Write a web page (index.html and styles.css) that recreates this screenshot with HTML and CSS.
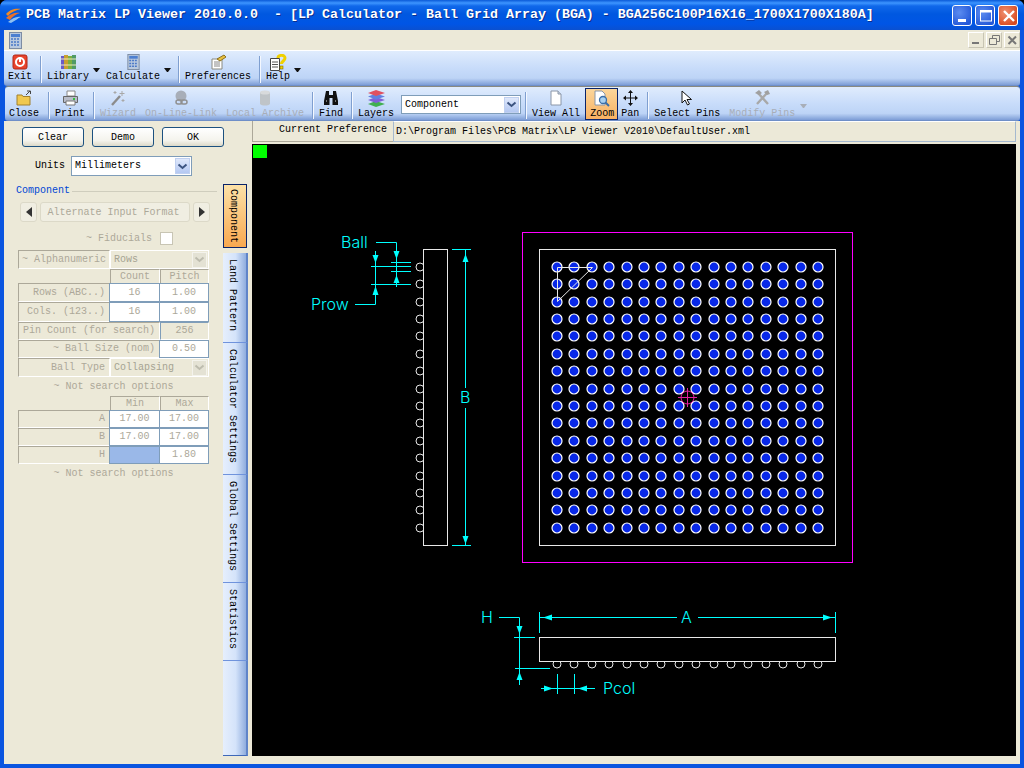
FILE: index.html
```html
<!DOCTYPE html>
<html lang="en">
<head>
<meta charset="utf-8">
<title>PCB Matrix LP Viewer</title>
<link rel="stylesheet" href="styles.css">
</head>
<body>
<div class="window">
  <header class="titlebar">
    <svg class="app-logo" width="17" height="17" viewBox="0 0 17 17"><path d="M1 7C5 2 11 1 16 2C11 3 6 5 3 9Z" fill="#f08a24"/><path d="M1 11C5 7 10 5 15 6C11 7 7 10 5 13Z" fill="#e8702a"/><path d="M3 15C7 12 11 9 16 10C13 11 10 14 6 16Z" fill="#8fc0f0"/></svg>
    <span class="title-text">PCB Matrix LP Viewer 2010.0.0  - [LP Calculator - Ball Grid Array (BGA) - BGA256C100P16X16_1700X1700X180A]</span>
    <div class="win-btns">
      <span class="win-btn"><svg width="20" height="20" viewBox="0 0 20 20"><rect x="5" y="13" width="8" height="3" fill="#fff"/></svg></span>
      <span class="win-btn"><svg width="20" height="20" viewBox="0 0 20 20"><rect x="4.500" y="5" width="11" height="10" fill="none" stroke="#fff"/><rect x="4" y="4" width="12" height="2.500" fill="#fff"/></svg></span>
      <span class="win-btn win-btn-close"><svg width="20" height="20" viewBox="0 0 20 20"><path d="M5 5L15 15M15 5L5 15" stroke="#fff" stroke-width="2.400"/></svg></span>
    </div>
  </header>

  <div class="menu-row">
    <svg class="menu-icon" width="13" height="17" viewBox="0 0 13 17"><rect x=".5" y=".5" width="12" height="16" fill="#b9c9de" stroke="#7d8ca3"/><rect x="2" y="2" width="9" height="3" fill="#4c7fd0"/><path d="M2 7h9M2 10h9M2 13h9" stroke="#4a78c8" stroke-width="1.600" stroke-dasharray="2 1"/></svg>
    <div class="mdi-btns">
      <span class="mdi-btn"><svg width="15" height="15" viewBox="0 0 15 15"><rect x="3" y="9" width="7" height="2" fill="#777"/></svg></span>
      <span class="mdi-btn"><svg width="15" height="15" viewBox="0 0 15 15"><path d="M5.500 5.500V2.500H12.500V8.500H10M2.500 5.500H9.500V11.500H2.500Z" fill="none" stroke="#777"/></svg></span>
      <span class="mdi-btn"><svg width="15" height="15" viewBox="0 0 15 15"><path d="M3.500 3.500L11 11M11 3.500L3.500 11" stroke="#777" stroke-width="2"/></svg></span>
    </div>
  </div>

  <nav class="toolbar toolbar-main">
    <div class="tool">
      <svg width="16" height="16" viewBox="0 0 16 16"><rect x="1" y="1" width="14" height="14" rx="2" fill="#e8432c" stroke="#b02818"/><circle cx="8" cy="8" r="4" fill="none" stroke="#fff" stroke-width="2"/><rect x="7" y="3" width="2" height="5" fill="#fff"/></svg>
      <span>Exit</span>
    </div>
    <i class="sep"></i>
    <div class="tool">
      <svg width="17" height="16" viewBox="0 0 17 16"><rect x="1" y="2" width="3" height="13" fill="#6a5cc8"/><rect x="4" y="1" width="4" height="14" fill="#c8a030"/><rect x="8" y="2" width="4" height="13" fill="#7ab040"/><rect x="12" y="1" width="4" height="14" fill="#4f9a68"/><path d="M1 5h15M1 11h15" stroke="#f0e8c0"/></svg>
      <span>Library</span>
    </div>
    <i class="drop"></i>
    <div class="tool">
      <svg width="13" height="16" viewBox="0 0 13 17"><rect x=".5" y=".5" width="12" height="16" fill="#b9c9de" stroke="#7d8ca3"/><rect x="2" y="2" width="9" height="3" fill="#4c7fd0"/><path d="M2 7h9M2 10h9M2 13h9" stroke="#4a78c8" stroke-width="1.600" stroke-dasharray="2 1"/></svg>
      <span>Calculate</span>
    </div>
    <i class="drop"></i>
    <i class="sep"></i>
    <div class="tool">
      <svg width="17" height="16" viewBox="0 0 17 16"><path d="M2 5H12V15H2Z" fill="#fff" stroke="#8a8a80"/><path d="M4 8h6M4 10h6M4 12h6" stroke="#888"/><path d="M7 5L14 1L16 3L10 7Z" fill="#e8c040" stroke="#8a7020"/></svg>
      <span>Preferences</span>
    </div>
    <i class="sep"></i>
    <div class="tool">
      <svg width="18" height="17" viewBox="0 0 18 17"><path d="M1.500 4.500H10.500V16.500H1.500Z" fill="#fff" stroke="#444"/><path d="M3 8h6M3 10.500h6M3 13h6" stroke="#555"/><path d="M9 4C9 1 16 0 16 4C16 7 12.500 7 12.500 10" fill="none" stroke="#f0d000" stroke-width="3"/><rect x="11" y="12" width="3" height="3" fill="#f0d000" stroke="#665800" stroke-width=".5"/></svg>
      <span>Help</span>
    </div>
    <i class="drop"></i>
  </nav>

  <nav class="toolbar toolbar-sub">
    <div class="tool tool-wide">
      <svg width="17" height="16" viewBox="0 0 17 16"><path d="M1 5H6L7 6.500H14V15H1Z" fill="#f0c850" stroke="#a08030"/><path d="M10 5L14 1M11 1H14.500V4" fill="none" stroke="#444"/></svg>
      <span>Close</span>
    </div>
    <i class="sep"></i>
    <div class="tool">
      <svg width="17" height="16" viewBox="0 0 17 16"><path d="M5 1H13V6H5Z" fill="#fff" stroke="#888"/><path d="M1.500 6.500H15.500V12.500H1.500Z" fill="#b8bcc8" stroke="#666"/><path d="M4 11H13V15H4Z" fill="#fff" stroke="#777"/><rect x="11" y="8" width="2" height="2" fill="#30c040"/></svg>
      <span>Print</span>
    </div>
    <i class="sep"></i>
    <div class="tool tool-off tool-wide">
      <svg width="16" height="16" viewBox="0 0 16 16"><path d="M2 15L10 6" stroke="#8c8c8c" stroke-width="2.400"/><path d="M12 1v5M9.500 3.500h5M5 1v3M3.500 2.500h3M13 9v3M11.500 10.500h3" stroke="#a8a8a8"/></svg>
      <span>Wizard</span>
    </div>
    <div class="tool tool-off tool-wide">
      <svg width="16" height="16" viewBox="0 0 16 16"><circle cx="8" cy="6" r="5.500" fill="#a8aeb8"/><rect x="3" y="10" width="6" height="4" rx="2" fill="none" stroke="#909090" stroke-width="1.500"/><rect x="8" y="10" width="6" height="4" rx="2" fill="none" stroke="#909090" stroke-width="1.500"/></svg>
      <span>On-Line-Link</span>
    </div>
    <div class="tool tool-off">
      <svg width="14" height="16" viewBox="0 0 14 16"><path d="M2 2V14C4 16 10 16 12 14V2Z" fill="#bfc4c8"/><ellipse cx="7" cy="2.500" rx="5" ry="2" fill="#d8dadc"/></svg>
      <span>Local Archive</span>
    </div>
    <i class="sep"></i>
    <div class="tool">
      <svg width="16" height="16" viewBox="0 0 16 16"><path d="M3 1H6V5H10V1H13L15 11V15H9.500V8H6.500V15H1V11Z" fill="#111"/><path d="M3 11h1M12 11h1" stroke="#ddd"/></svg>
      <span>Find</span>
    </div>
    <i class="sep"></i>
    <div class="tool tool-layers">
      <svg width="19" height="18" viewBox="0 0 19 18"><path d="M1 14L9 11L18 14L9 17Z" fill="#40b050"/><path d="M1 10L9 7L18 10L9 13Z" fill="#8060d8"/><path d="M1 6.500L9 3.500L18 6.500L9 9.500Z" fill="#6080e0"/><path d="M1 3L9 0L18 3L9 6Z" fill="#e05060"/></svg>
      <span>Layers</span>
    </div>
    <div class="combo combo-tool"><span>Component</span><b class="chev"><svg width="11" height="7" viewBox="0 0 11 7"><path d="M1.500 1.500L5.500 5L9.500 1.500" fill="none" stroke="#3c5480" stroke-width="2"/></svg></b></div>
    <i class="sep"></i>
    <div class="tool">
      <svg width="12" height="16" viewBox="0 0 12 16"><path d="M1 1H8L11 4V15H1Z" fill="#fff" stroke="#8a96a8"/><path d="M8 1V4H11" fill="#c8d4e4" stroke="#8a96a8"/></svg>
      <span>View All</span>
    </div>
    <div class="tool tool-active">
      <svg width="18" height="17" viewBox="0 0 18 17"><path d="M2 1H9L12 4V15H2Z" fill="#fff" stroke="#8a96a8"/><circle cx="10" cy="10" r="3.500" fill="#a8d0f0" stroke="#3a6ea8" stroke-width="1.300"/><path d="M12.500 12.500L16 16" stroke="#3a6ea8" stroke-width="2"/></svg>
      <span>Zoom</span>
    </div>
    <div class="tool tool-pan">
      <svg width="15" height="16" viewBox="0 0 15 16"><path d="M7.500 1V15M1 8H14" stroke="#111"/><path d="M7.500 0L5 3H10ZM7.500 16L5 13H10ZM0 8L3 5.500V10.500ZM15 8L12 5.500V10.500Z" fill="#111"/></svg>
      <span>Pan</span>
    </div>
    <i class="sep"></i>
    <div class="tool tool-wide">
      <svg width="12" height="16" viewBox="0 0 12 16"><path d="M1 1V13L4 10L6.500 15L8.500 14L6 9.500H10.500Z" fill="#fff" stroke="#111"/></svg>
      <span>Select Pins</span>
    </div>
    <div class="tool tool-off">
      <svg width="17" height="16" viewBox="0 0 17 16"><path d="M3 14L13 3M14 14L4 3" stroke="#a8a8a8" stroke-width="2.400"/><path d="M1 3L5 0L8 3L5 5ZM10 2L14 0L16 4L13 5Z" fill="#a0a0a0"/></svg>
      <span>Modify Pins</span>
    </div>
    <i class="drop drop-off"></i>
  </nav>

  <main class="content">
    <aside class="panel">
      <div class="actions">
        <button class="btn" type="button">Clear</button>
        <button class="btn" type="button">Demo</button>
        <button class="btn" type="button">OK</button>
      </div>
      <div class="units">
        <span>Units</span>
        <div class="combo combo-units"><span>Millimeters</span><b class="chev"><svg width="11" height="7" viewBox="0 0 11 7"><path d="M1.500 1.500L5.500 5L9.500 1.500" fill="none" stroke="#3c5480" stroke-width="2"/></svg></b></div>
      </div>
      <div class="group-head"><span>Component</span><i></i></div>
      <div class="nav-row">
        <span class="nav-btn"><svg width="6" height="10" viewBox="0 0 6 10"><path d="M6 0V10L0 5Z" fill="#333"/></svg></span>
        <span class="nav-btn nav-main">Alternate Input Format</span>
        <span class="nav-btn"><svg width="6" height="10" viewBox="0 0 6 10"><path d="M0 0V10L6 5Z" fill="#333"/></svg></span>
      </div>
      <div class="fiducials"><span>~ Fiducials</span><i class="check"></i></div>
      <div class="form-grid">
        <div class="cell cell-left">~ Alphanumeric</div>
        <div class="cell-select span2"><span>Rows</span><b class="chev chev-off"><svg width="11" height="7" viewBox="0 0 11 7"><path d="M1.500 1.500L5.500 5L9.500 1.500" fill="none" stroke="#bdbcae" stroke-width="2"/></svg></b></div>
        <div class="head head-start">Count</div>
        <div class="head">Pitch</div>
        <div class="cell">Rows (ABC..)</div>
        <div class="field">16</div>
        <div class="field">1.00</div>
        <div class="cell">Cols. (123..)</div>
        <div class="field">16</div>
        <div class="field">1.00</div>
        <div class="cell cell-center span2">Pin Count (for search)</div>
        <div class="readout">256</div>
        <div class="cell span2">~ Ball Size (nom)</div>
        <div class="field">0.50</div>
        <div class="cell">Ball Type</div>
        <div class="cell-select span2"><span>Collapsing</span><b class="chev chev-off"><svg width="11" height="7" viewBox="0 0 11 7"><path d="M1.500 1.500L5.500 5L9.500 1.500" fill="none" stroke="#bdbcae" stroke-width="2"/></svg></b></div>
        <div class="note span3">~ Not search options</div>
        <div class="head head-start">Min</div>
        <div class="head">Max</div>
        <div class="cell">A</div>
        <div class="field">17.00</div>
        <div class="field">17.00</div>
        <div class="cell">B</div>
        <div class="field">17.00</div>
        <div class="field">17.00</div>
        <div class="cell">H</div>
        <div class="field field-selected"></div>
        <div class="field">1.80</div>
        <div class="note span3">~ Not search options</div>
      </div>
    </aside>

    <div class="tabs">
      <div class="tab tab-active">Component</div>
      <div class="tab">Land Pattern</div>
      <div class="tab">Calculator Settings</div>
      <div class="tab">Global Settings</div>
      <div class="tab">Statistics</div>
      <div class="tab tab-rest"></div>
    </div>

    <section class="viewer">
      <div class="pref-bar">
        <div class="pref-label">Current Preference</div>
        <div class="pref-path">D:\Program Files\PCB Matrix\LP Viewer V2010\DefaultUser.xml</div>
      </div>
      <svg class="canvas" width="764" height="612" viewBox="252 144 764 612">
        <defs>
          <g id="ballrow" class="ball">
            <circle cx="557" cy="267" r="5"/><circle cx="574" cy="267" r="5"/><circle cx="592" cy="267" r="5"/><circle cx="609" cy="267" r="5"/><circle cx="627" cy="267" r="5"/><circle cx="644" cy="267" r="5"/><circle cx="661" cy="267" r="5"/><circle cx="679" cy="267" r="5"/><circle cx="696" cy="267" r="5"/><circle cx="714" cy="267" r="5"/><circle cx="731" cy="267" r="5"/><circle cx="748" cy="267" r="5"/><circle cx="766" cy="267" r="5"/><circle cx="783" cy="267" r="5"/><circle cx="801" cy="267" r="5"/><circle cx="818" cy="267" r="5"/>
          </g>
        </defs>
        <rect class="marker" x="253" y="145" width="14" height="13"/>
        <rect class="outline-magenta" x="522.500" y="232.500" width="330" height="330"/>
        <rect class="outline-white" x="539.500" y="249.500" width="296" height="296"/>
        <use href="#ballrow"/><use href="#ballrow" y="17"/><use href="#ballrow" y="35"/><use href="#ballrow" y="52"/><use href="#ballrow" y="69"/><use href="#ballrow" y="87"/><use href="#ballrow" y="104"/><use href="#ballrow" y="122"/><use href="#ballrow" y="139"/><use href="#ballrow" y="156"/><use href="#ballrow" y="174"/><use href="#ballrow" y="191"/><use href="#ballrow" y="209"/><use href="#ballrow" y="226"/><use href="#ballrow" y="243"/><use href="#ballrow" y="261"/>
        <path class="outline-white" d="M557.500 267.500H592.500M557.500 267.500V301.500L592.500 267.500"/>
        <path class="crosshair" d="M678 397.500H697M687.500 388V407"/>
        <circle class="crosshair" cx="687.500" cy="397.500" r="6.500"/>
        <!-- side view -->
        <g class="pin">
          <circle cx="420" cy="267" r="4"/><circle cx="420" cy="284" r="4"/><circle cx="420" cy="302" r="4"/><circle cx="420" cy="319" r="4"/><circle cx="420" cy="336" r="4"/><circle cx="420" cy="354" r="4"/><circle cx="420" cy="371" r="4"/><circle cx="420" cy="389" r="4"/><circle cx="420" cy="406" r="4"/><circle cx="420" cy="423" r="4"/><circle cx="420" cy="441" r="4"/><circle cx="420" cy="458" r="4"/><circle cx="420" cy="476" r="4"/><circle cx="420" cy="493" r="4"/><circle cx="420" cy="510" r="4"/><circle cx="420" cy="528" r="4"/>
        </g>
        <rect class="body-rect" x="423.500" y="249.500" width="24" height="296"/>
        <!-- bottom view -->
        <g class="pin">
          <circle cx="557" cy="664" r="4"/><circle cx="574" cy="664" r="4"/><circle cx="592" cy="664" r="4"/><circle cx="609" cy="664" r="4"/><circle cx="627" cy="664" r="4"/><circle cx="644" cy="664" r="4"/><circle cx="661" cy="664" r="4"/><circle cx="679" cy="664" r="4"/><circle cx="696" cy="664" r="4"/><circle cx="714" cy="664" r="4"/><circle cx="731" cy="664" r="4"/><circle cx="748" cy="664" r="4"/><circle cx="766" cy="664" r="4"/><circle cx="783" cy="664" r="4"/><circle cx="801" cy="664" r="4"/><circle cx="818" cy="664" r="4"/>
        </g>
        <rect class="body-rect" x="539.500" y="637.500" width="296" height="24"/>
        <!-- dimensions -->
        <path class="dim" d="M376 242.500H396.500V287M391 262.500H411M391 271.500H411M371 266.500H411M371 284.500H411M375.500 251V304.500H355"/>
        <path class="dim" d="M465.500 250V388M465.500 408V545M452 249.500H471M452 545.500H471"/>
        <path class="dim" d="M540 617.500H677M698 617.500H835M539.500 612V633M835.500 612V633"/>
        <path class="dim" d="M499 617.500H519.500V685M514 637.500H535M515 668.500H550"/>
        <path class="dim" d="M557.500 674V694M574.500 674V694M541 688.500H595"/>
        <path class="arrow" d="M393.500 251H399.500L396.500 259ZM393.500 283H399.500L396.500 275ZM372.500 255H378.500L375.500 263ZM372.500 295H378.500L375.500 286ZM465.500 254L462.500 262H468.500ZM465.500 544L462.500 536H468.500ZM543 617.500L552 614.500V620.500ZM832 617.500L823 614.500V620.500ZM516.500 626H522.500L519.500 634ZM516.500 680H522.500L519.500 672ZM553 688.500L544 685.500V691.500ZM578 688.500L587 685.500V691.500Z"/>
        <text class="label" x="341" y="248">Ball</text>
        <text class="label" x="311" y="310">Prow</text>
        <text class="label" x="460" y="403">B</text>
        <text class="label" x="681" y="623">A</text>
        <text class="label" x="481" y="623">H</text>
        <text class="label" x="603" y="694">Pcol</text>
      </svg>
    </section>
  </main>
</div>
</body>
</html>
```

FILE: styles.css
```css
* { box-sizing: border-box; }
html, body { margin: 0; padding: 0; }
body { width: 1024px; height: 768px; overflow: hidden; font: 10px/12px "Liberation Mono", monospace; color: #000; background: #000; }

.window { width: 1024px; height: 768px; display: flex; flex-direction: column; padding: 0 4px 4px; border-radius: 7px 7px 0 0; background: #0a55e0; }

/* title bar */
.titlebar { flex: 0 0 30px; margin: 0 -4px; padding: 0 6px 0 5px; display: flex; align-items: center; color: #fff; border-radius: 7px 7px 0 0;
  background: linear-gradient(#0a5ad8 0, #3d95ff 3px, #1068ea 6px, #0058e0 14px, #0055e5 24px, #0a50d0 30px); }
.app-logo { flex: none; margin-right: 4px; }
.title-text { flex: 1; font-size: 13.33px; font-weight: bold; white-space: pre; text-shadow: 1px 1px 0 #0a2f90; }
.win-btns { display: flex; gap: 3px; }
.win-btn { width: 20px; height: 21px; display: block; border: 1px solid #fff; border-radius: 3px; background: radial-gradient(circle at 35% 35%, #5c8cf0, #2458d8 80%); }
.win-btn svg { display: block; }
.win-btn-close { background: radial-gradient(circle at 35% 35%, #f09070, #d84a20 80%); }

/* menu row */
.menu-row { flex: 0 0 20px; padding-left: 5px; display: flex; align-items: center; justify-content: space-between; background: #ece9d8; }
.menu-icon { flex: none; }
.mdi-btns { display: flex; gap: 2px; }
.mdi-btn { width: 16px; height: 16px; border: 1px solid; border-color: #fff #c8c5b4 #c8c5b4 #fff; }
.mdi-btn svg { display: block; }

/* toolbars */
.toolbar { display: flex; align-items: flex-start; background: linear-gradient(#e0ecfd, #c8dcfa 50%, #bdd4f6 80%, #7d9dd6); }
.toolbar-main { flex: 0 0 36px; padding: 3px 0 0 4px; border-top: 1px solid #fff; border-radius: 0 0 3px 3px; border-bottom: 1px solid #6f8fc8; }
.toolbar-sub { flex: 0 0 34px; margin-top: 1px; margin-left: 1px; padding: 3px 0 0 4px; border-radius: 3px; border-bottom: 1px solid #6f8fc8; box-shadow: 0 -1px 0 #8a8a80; }
.tool { flex: none; margin-right: 8px; display: flex; flex-direction: column; align-items: center; justify-content: space-between; white-space: pre; }
.toolbar-main .tool { height: 29px; }
.toolbar-sub .tool { height: 30px; }
.tool svg { display: block; flex: none; margin-bottom: -3px; }
.tool span { display: block; height: 12px; }
.tool-wide { margin-right: 9px; }
.tool-off { color: #a8aeb8; }
.toolbar-sub .tool-active { margin: -2px 3px 0 -3px; padding: 2px 4px 0 5px; width: 33px; height: 32px; background: linear-gradient(#fcd79c, #f8b060); outline: 1px solid #0a246a; outline-offset: -1px; }
.tool-layers { margin-right: 7px; }
.sep { flex: none; width: 1px; height: 27px; margin: 2px 6px 0 0; background: #7f9fd0; box-shadow: 1px 0 0 #f4f8ff; }
.drop { flex: none; width: 7px; height: 4px; margin: 14px 6px 0 -4px; border-left: 3.5px solid transparent; border-right: 3.5px solid transparent; border-top: 4px solid #111; }
.drop-off { margin-left: -3px; border-top-color: #a8aeb8; }
.drop + .sep { margin-left: 1px; }

/* combos */
.combo { flex: none; display: flex; align-items: center; justify-content: space-between; background: #fff; border: 1px solid #7f9db9; padding: 0 1px 0 3px; }
.combo-tool { width: 120px; height: 19px; margin: 5px 4px 0 0; }
.combo-units { width: 121px; height: 20px; }
.chev { flex: none; width: 15px; height: 16px; display: flex; align-items: center; justify-content: center; background: linear-gradient(#dfe8fb, #b4c8f2); border: 1px solid #c0d0f0; }
.chev-off { background: #e4e2d4; border-color: #f4f3ec; }

/* left panel */
.content { flex: 1; display: flex; min-height: 0; background: #ece9d8; }
.panel { flex: 0 0 218px; min-width: 0; padding-top: 6px; }
.actions { display: flex; gap: 8px; padding-left: 18px; width: 222px; }
.btn { flex: none; width: 62px; height: 20px; padding: 2px 0 0; font: inherit; color: #000; border: 1px solid #1c5180; border-radius: 3px; background: linear-gradient(#fff, #f4f3ec 70%, #dcd9c8); }
.units { margin-top: 9px; height: 20px; padding-left: 31px; display: flex; align-items: center; gap: 6px; }
.group-head { margin-top: 8px; height: 14px; padding-left: 12px; display: flex; align-items: center; gap: 2px; color: #0046d5; }
.group-head i { flex: 0 0 145px; height: 1px; background: #cfcdbd; }
.nav-row { margin-top: 4px; padding-left: 16px; display: flex; gap: 3px; height: 20px; color: #aca899; }
.nav-btn { flex: 0 0 17px; display: flex; align-items: center; justify-content: center; border: 1px solid #dcd9c8; border-radius: 3px; background: #f0eee2; }
.nav-main { flex: 0 0 150px; padding: 2px 3px 0 0; }
.fiducials { margin-top: 10px; height: 13px; padding-left: 82px; display: flex; align-items: center; gap: 8px; color: #aca899; }
.check { width: 13px; height: 13px; background: #fff; border: 1px solid #c8c5b4; }

/* form grid */
.form-grid { margin: 5px 0 0 14px; display: grid; grid-template-columns: 92px 50px 49px; grid-template-rows: 19px 14px 19px 20px 18px 18px 19px 19px 14px 18px 18px 18px 18px; color: #aca899; }
.cell { display: flex; align-items: center; justify-content: flex-end; padding-right: 4px; white-space: nowrap; border: 1px solid; border-color: #aca899 #fff #fff #aca899; }
.cell-left { justify-content: flex-start; padding: 0 0 0 3px; }
.cell-center { justify-content: center; padding: 0; }
.cell-select { display: flex; align-items: center; justify-content: space-between; padding: 0 1px 0 3px; border: 1px solid #fff; color: #a6a492; }
.head { display: flex; align-items: center; justify-content: center; border: 1px solid; border-color: #aca899 #fff #fff #aca899; border-bottom: 0; }
.head-start { grid-column: 2; }
.field { display: flex; align-items: center; justify-content: center; background: #fff; border: 1px solid #7f9db9; margin-left: -1px; }
.field-selected { background: #9ab8e8; }
.readout { display: flex; align-items: center; justify-content: center; border: 1px solid; border-color: #7f9db9 #fff #fff #7f9db9; }
.note { display: flex; align-items: center; justify-content: center; padding-top: 1px; }
.span2 { grid-column: span 2; }
.span3 { grid-column: span 3; }

/* tabs */
.tabs { flex: 0 0 25px; margin: 63px 0 8px 1px; display: flex; flex-direction: column; }
.tab { writing-mode: vertical-rl; flex: none; width: 25px; padding: 6px 6px 11px 0; display: flex; align-items: center; white-space: nowrap; border-bottom: 1px solid #6f93dc; border-right: 2px solid #5f84c8; background: linear-gradient(90deg, #e6effd, #d4e3fa 55%, #8fadde); }
.tab-active { width: 24px; margin-bottom: 5px; padding: 4px 5px 4px 0; justify-content: center; border: 1px solid #0a246a; background: linear-gradient(#fde2a8, #f8a850); }
.tab-rest { flex: 1; padding: 0; border-bottom-color: #3e68b8; }

/* viewer */
.viewer { flex: 1; margin-left: 4px; margin-right: 4px; display: flex; flex-direction: column; min-width: 0; }
.pref-bar { flex: 0 0 23px; display: flex; }
.pref-label { flex: 0 0 141px; height: 21px; padding: 0 6px 2px 0; display: flex; align-items: center; justify-content: flex-end; border-left: 1px solid #aca899; border-bottom: 1px solid #aca899; }
.pref-path { flex: 1; height: 21px; padding-left: 2px; display: flex; align-items: center; border: 1px solid #a5b9cf; border-top-color: #fff; white-space: pre; }
.canvas { display: block; flex: none; background: #000; }

/* CAD drawing */
.marker { fill: #00ff00; }
.outline-magenta { fill: none; stroke: #ff00ff; }
.outline-white { fill: none; stroke: #e8e8e8; }
.crosshair { fill: none; stroke: #e020a0; }
.ball circle { fill: #0828e8; stroke: #fff; stroke-width: 1.200; }
.pin circle { fill: none; stroke: #e8e8e8; }
.body-rect { fill: #000; stroke: #e8e8e8; }
.dim { fill: none; stroke: #00ffff; }
.arrow { fill: #00ffff; }
.label { font: 300 16px Inter, "Liberation Sans", sans-serif; fill: #00ffff; }
```
